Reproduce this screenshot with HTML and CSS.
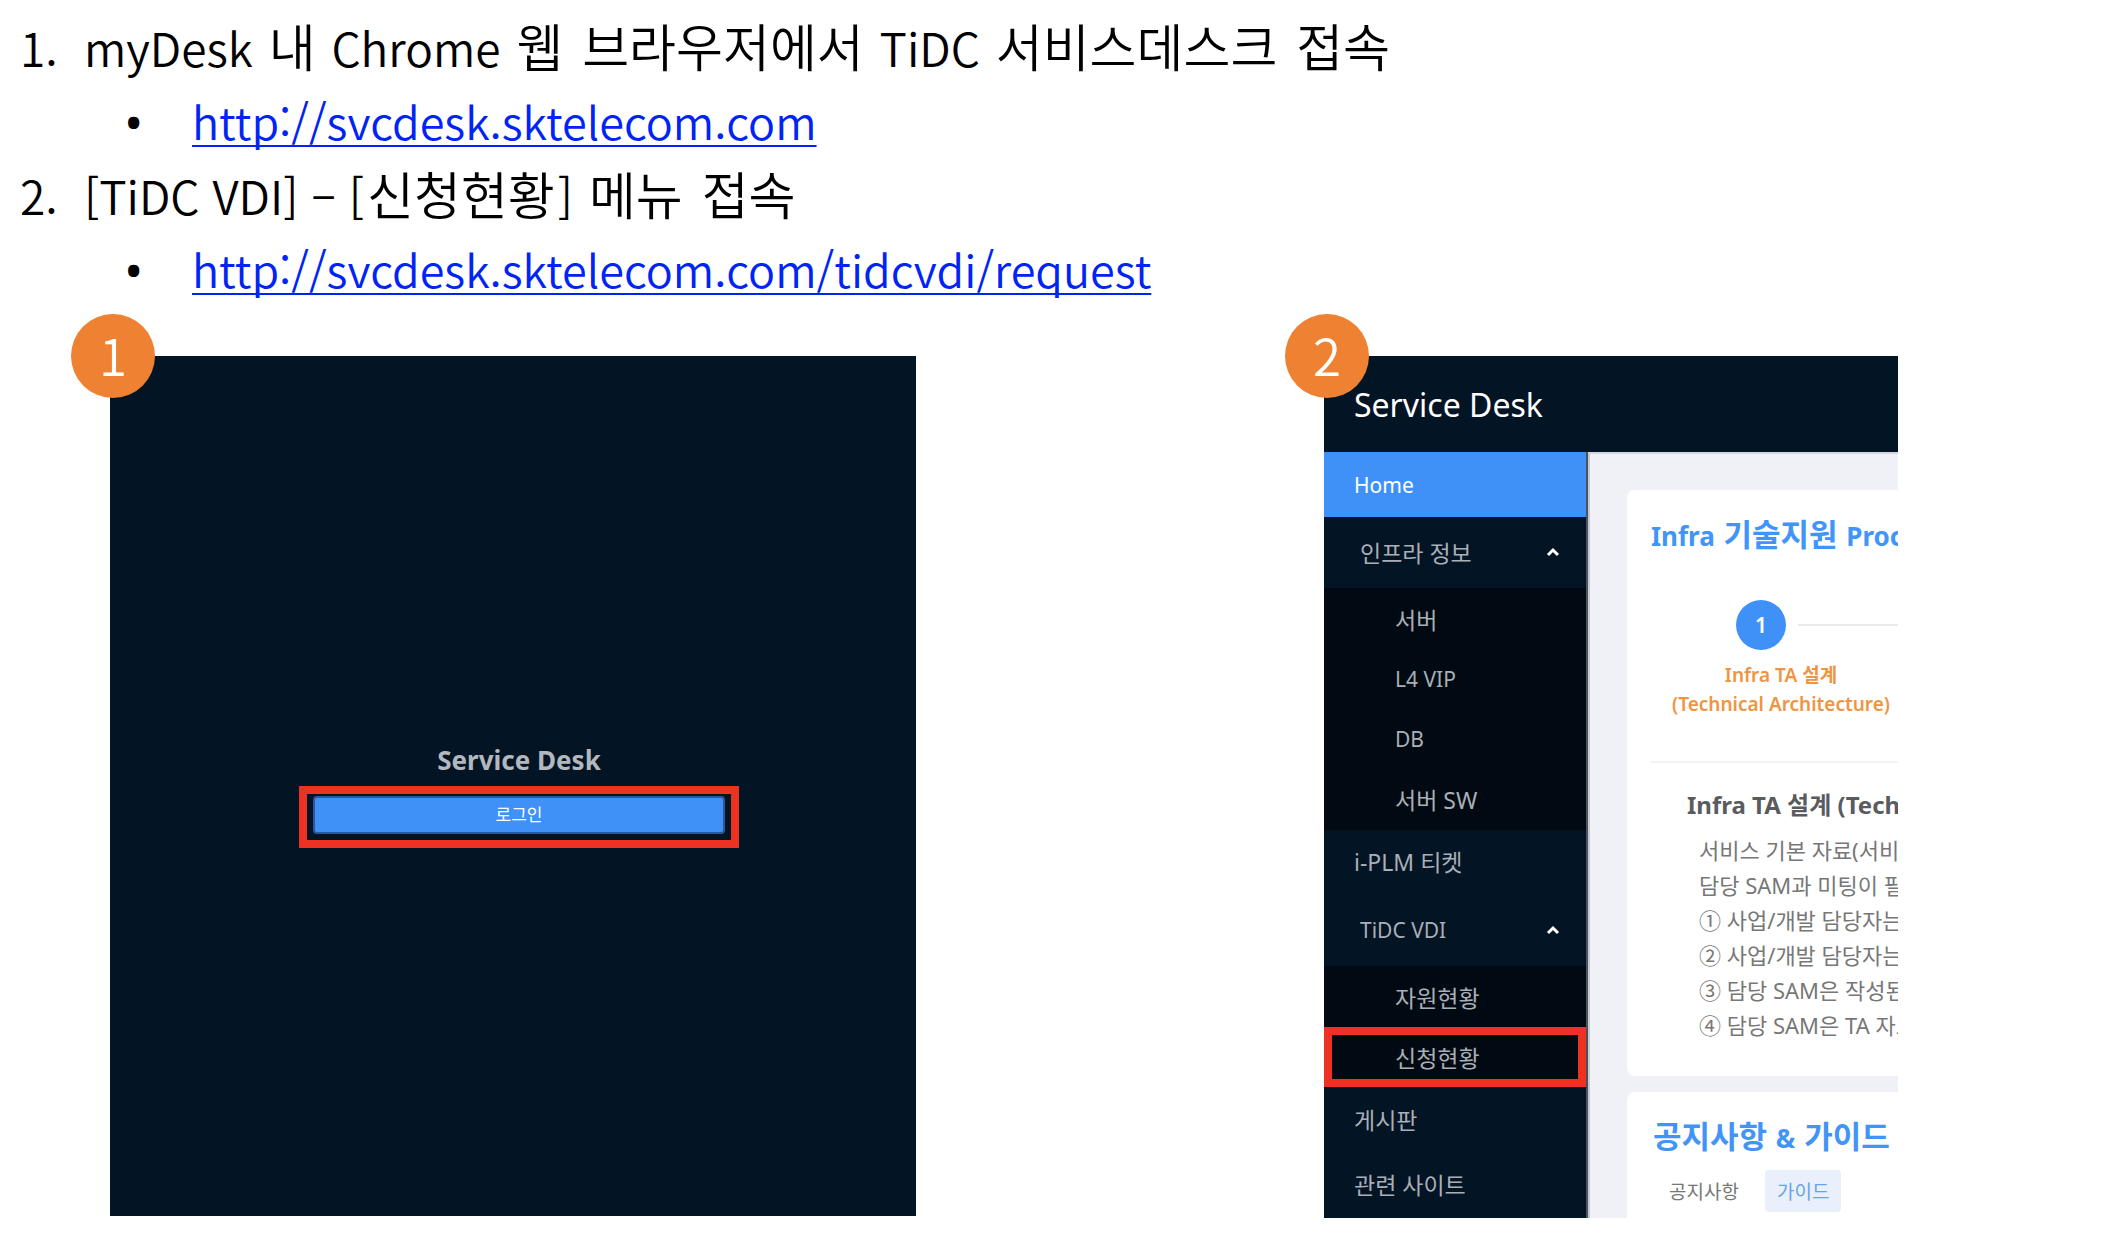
FILE: index.html
```html
<!DOCTYPE html>
<html lang="ko">
<head>
  <meta charset="UTF-8" />
  <title>TiDC 서비스데스크 접속</title>
  <link rel="stylesheet" href="styles.css">
</head>
<body>

  <!-- Steps -->
  <ol class="steps">
    <li>
      <p class="step"><span class="mark">1.</span><span>myDesk <span class="ko">내</span> Chrome <span class="ko">웹</span> <span class="ko">브라우저에서</span> TiDC <span class="ko">서비스데스크</span> <span class="ko">접속</span></span></p>
      <p class="step sub"><span class="mark">•</span><a href="http://svcdesk.sktelecom.com">http://svcdesk.sktelecom.com</a></p>
    </li>
    <li>
      <p class="step"><span class="mark">2.</span><span>[TiDC VDI] – [<span class="ko">신청현황</span>] <span class="ko">메뉴</span> <span class="ko">접속</span></span></p>
      <p class="step sub"><span class="mark">•</span><a href="http://svcdesk.sktelecom.com/tidcvdi/request">http://svcdesk.sktelecom.com/tidcvdi/request</a></p>
    </li>
  </ol>

  <div class="shots">

    <!-- Login -->
    <section class="shot">
      <span class="badge">1</span>
      <div class="login">
        <h2>Service Desk</h2>
        <div class="login-mark">
          <button type="button">로그인</button>
        </div>
      </div>
    </section>

    <!-- Service Desk home -->
    <section class="shot">
      <span class="badge">2</span>
      <div class="desk">
        <header class="desk-header">Service Desk</header>
        <div class="desk-body">

          <nav class="menu">
            <a class="item active en" href="#">Home</a>
            <button class="item group" type="button">인프라 정보
              <svg width="14" height="10" viewBox="0 0 14 10"><path d="M2 8 L7 3 L12 8" fill="none" stroke="#fff" stroke-width="3" /></svg>
            </button>
            <div class="submenu">
              <a href="#">서버</a>
              <a class="en" href="#">L4 VIP</a>
              <a class="en" href="#">DB</a>
              <a href="#">서버 SW</a>
            </div>
            <a class="item" href="#">i-PLM 티켓</a>
            <button class="item group en" type="button">TiDC VDI
              <svg width="14" height="10" viewBox="0 0 14 10"><path d="M2 8 L7 3 L12 8" fill="none" stroke="#fff" stroke-width="3" /></svg>
            </button>
            <div class="submenu">
              <a href="#">자원현황</a>
              <a class="marked" href="#">신청현황</a>
            </div>
            <a class="item" href="#">게시판</a>
            <a class="item" href="#">관련 사이트</a>
          </nav>

          <main class="content">
            <section class="card">
              <h3>Infra <span class="ko">기술지원</span> Proc</h3>
              <div class="flow">
                <div class="flow-top">
                  <span class="flow-num">1</span>
                  <span class="flow-line"></span>
                </div>
                <p class="flow-label">Infra TA 설계<br>(Technical Architecture)</p>
              </div>
              <div class="detail">
                <h4>Infra TA 설계 (Tech</h4>
                <p>서비스 기본 자료(서비</p>
                <p>담당 SAM과 미팅이 필</p>
                <p>① 사업/개발 담당자는</p>
                <p>② 사업/개발 담당자는</p>
                <p>③ 담당 SAM은 작성된</p>
                <p>④ 담당 SAM은 TA 자료</p>
              </div>
            </section>
            <section class="card">
              <h3><span class="ko">공지사항</span> &amp; <span class="ko">가이드</span></h3>
              <div class="tabs">
                <button type="button">공지사항</button>
                <button class="on" type="button">가이드</button>
              </div>
            </section>
          </main>

        </div>
      </div>
    </section>

  </div>

</body>
</html>
```
FILE: styles.css
```css
* {
  box-sizing: border-box;
}
body {
  margin: 0;
  padding-top: 10px;
  font-family: "Noto Sans", "Noto Sans CJK KR", sans-serif;
  background: #fff;
  color: #000;
}
h2, h3, h4, p {
  margin: 0;
}
a {
  color: inherit;
  text-decoration: none;
}
button {
  font: inherit;
  color: inherit;
  border: none;
  background: none;
  padding: 0;
  cursor: pointer;
}

/* Steps */
.steps {
  list-style: none;
  margin: 0;
  padding: 0 0 0 20px;
  font-family: "Noto Sans CJK KR", sans-serif;
  font-size: 46px;
  font-weight: 350;
  line-height: 74px;
}
.step {
  display: flex;
  height: 74px;
  white-space: nowrap;
}
.step .mark {
  width: 64px;
}
.step .ko {
  margin: 0 3px;
  font-size: 51px;
  line-height: 1;
}
.sub {
  padding-left: 105px;
}
.sub .mark {
  width: 67px;
  font-family: "Open Sans", sans-serif;
  font-weight: 600;
}
.sub a {
  color: #0024f5;
  font-size: 45px;
  text-decoration: underline;
  text-decoration-thickness: 2px;
  text-underline-offset: 5px;
  text-decoration-skip-ink: none;
}

/* Screens */
.shots {
  display: grid;
  grid-template-columns: 806fr 574fr;
  column-gap: 408px;
  align-items: start;
  padding: 50px 212px 19px 110px;
}
.shot {
  position: relative;
  min-width: 0;
}
.badge {
  position: absolute;
  top: -42px;
  left: -39px;
  z-index: 1;
  width: 84px;
  height: 84px;
  border-radius: 50%;
  background: #ef8132;
  color: #fff;
  font-family: "Noto Sans CJK KR", sans-serif;
  font-size: 51px;
  font-weight: 350;
  line-height: 80px;
  text-align: center;
}

/* Login */
.login {
  display: flex;
  flex-direction: column;
  align-items: center;
  justify-content: center;
  min-height: 860px;
  padding: 16px 0 0 12px;
  background: #031425;
}
.login h2 {
  margin-bottom: 6px;
  color: #b3b8be;
  font-size: 26px;
  line-height: 40px;
}
.login-mark {
  width: 440px;
  padding: 2px 6px 6px;
  border: 8px solid #ed3223;
}
.login-mark button {
  display: block;
  width: 100%;
  height: 38px;
  border: 2px solid #27599b;
  border-radius: 4px;
  background: #3f91f8;
  color: #fff;
  font-size: 17px;
  line-height: 34px;
}

/* Service Desk home */
.desk {
  overflow: hidden;
}
.desk-header {
  height: 96px;
  padding-left: 30px;
  background: #031425;
  color: #fff;
  font-size: 32px;
  line-height: 98px;
}
.desk-body {
  display: flex;
}
.menu {
  flex: 0 0 264px;
  border-right: 2px solid #4a525b;
  background: #031425;
  color: #a9afb6;
  font-size: 23px;
}
.menu .en {
  font-size: 21px;
}
.menu .item {
  display: flex;
  align-items: center;
  width: 100%;
  height: 65px;
  padding: 0 0 4px 30px;
}
.menu .active {
  padding-bottom: 0;
  background: #3f91f8;
  color: #fff;
}
.menu .group {
  justify-content: space-between;
  height: 71px;
  padding: 0 26px 2px 36px;
}
.submenu {
  padding: 1px 0;
  background: #010a12;
}
.submenu a {
  display: flex;
  align-items: center;
  height: 60px;
  padding-left: 71px;
}
.submenu .marked {
  outline: 8px solid #ed3223;
  outline-offset: -8px;
}
.content {
  flex: 1;
  min-width: 0;
  padding: 36px 0 0 37px;
  border-top: 2px solid #d5d7dc;
  border-left: 2px solid #c6cace;
  background: #f0f1f6;
  white-space: nowrap;
}
.card {
  height: 586px;
  padding: 24px 0 0 24px;
  border-radius: 8px 0 0 8px;
  background: #fff;
}
.card + .card {
  height: 126px;
  margin-top: 16px;
  border-radius: 8px 0 0 0;
}
.card h3 {
  color: #4194f8;
  font-size: 26px;
  line-height: 44px;
}
.card h3 .ko {
  margin: 0 2px;
  font-size: 31px;
  line-height: 1;
}
.flow {
  padding: 42px 0 42px 0;
  border-bottom: 2px solid #f4f4f5;
}
.flow-top {
  display: flex;
  align-items: center;
  gap: 12px;
  padding-left: 85px;
}
.flow-num {
  flex: 0 0 50px;
  height: 50px;
  border-radius: 50%;
  background: #3f91f8;
  color: #fff;
  font-size: 21px;
  font-weight: 600;
  line-height: 50px;
  text-align: center;
}
.flow-line {
  flex: 1;
  height: 2px;
  background: #e9e9ea;
}
.flow-label {
  width: 260px;
  padding-top: 11px;
  color: #f0943f;
  font-size: 19px;
  font-weight: 600;
  line-height: 29px;
  text-align: center;
}
.detail {
  padding: 22px 0 0 48px;
  color: #777;
  font-size: 22px;
  line-height: 35px;
}
.detail h4 {
  margin: 0 0 8px -12px;
  color: #595b5e;
  font-size: 24px;
  line-height: 40px;
}
.tabs {
  display: flex;
  gap: 14px;
  padding-top: 10px;
}
.tabs button {
  height: 42px;
  padding: 0 12px;
  border-radius: 4px;
  color: #777;
  font-size: 19px;
}
.tabs button:first-child {
  padding-left: 18px;
}
.tabs .on {
  background: #e9f0fb;
  color: #6ba3e6;
}
```
